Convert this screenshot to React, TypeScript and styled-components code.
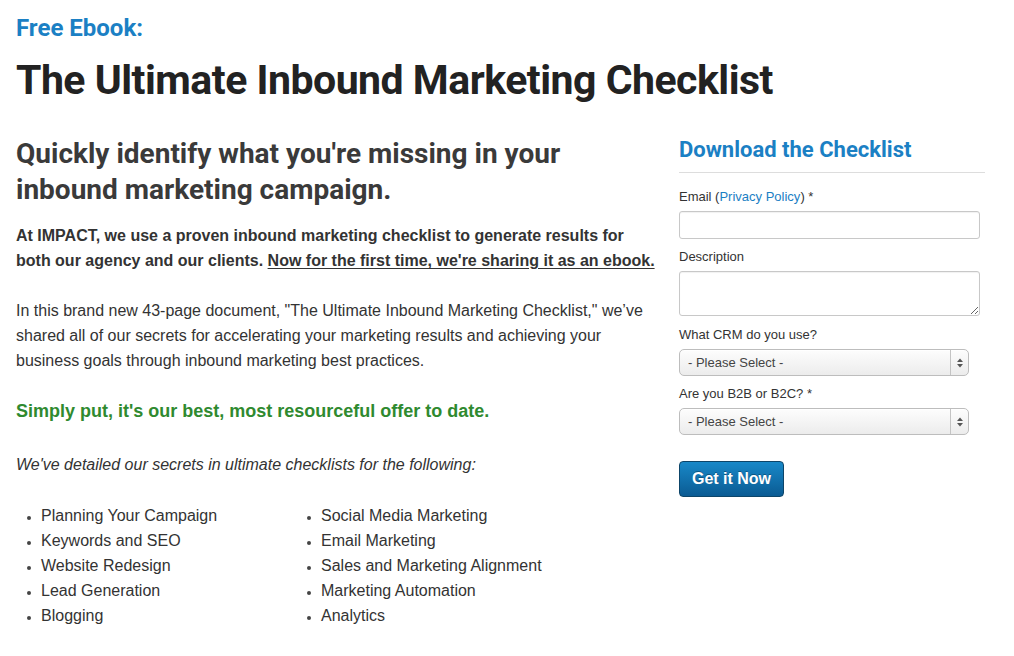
import styled, { createGlobalStyle } from 'styled-components';

const GlobalStyle = createGlobalStyle`
	html, body {
		margin: 0;
		padding: 0;
		background: #fff;
	}
	body {
		font-family: 'Liberation Sans', Arial, sans-serif;
		color: #333;
	}
`;

const leftItems = [
	'Planning Your Campaign',
	'Keywords and SEO',
	'Website Redesign',
	'Lead Generation',
	'Blogging',
];

const rightItems = [
	'Social Media Marketing',
	'Email Marketing',
	'Sales and Marketing Alignment',
	'Marketing Automation',
	'Analytics',
];

function SelectArrows() {
	return (
		<svg width='8' height='12' viewBox='0 0 8 12'>
			<path d='M4 1.5 L7 5 L1 5 Z' fill='#555' />
			<path d='M4 10.5 L7 7 L1 7 Z' fill='#555' />
		</svg>
	);
}

function App() {
	return (
		<Page>
			<GlobalStyle />
			<Kicker>Free Ebook:</Kicker>
			<Title>The Ultimate Inbound Marketing Checklist</Title>
			<Columns>
				<Main>
					<Lead>
						Quickly identify what you're missing in your
						<br />
						inbound marketing campaign.
					</Lead>
					<Intro>
						At IMPACT, we use a proven inbound marketing checklist to generate results for both our
						agency and our clients. <u>Now for the first time, we're sharing it as an ebook.</u>
					</Intro>
					<Body>
						In this brand new 43-page document, "The Ultimate Inbound Marketing Checklist," we’ve
						shared all of our secrets for accelerating your marketing results and achieving your
						business goals through inbound marketing best practices.
					</Body>
					<Highlight>Simply put, it's our best, most resourceful offer to date.</Highlight>
					<Note>We've detailed our secrets in ultimate checklists for the following:</Note>
					<ListGrid>
						<BulletList>
							{leftItems.map((item) => (
								<li key={item}>{item}</li>
							))}
						</BulletList>
						<BulletList>
							{rightItems.map((item) => (
								<li key={item}>{item}</li>
							))}
						</BulletList>
					</ListGrid>
				</Main>
				<Sidebar>
					<FormTitle>Download the Checklist</FormTitle>
					<Form onSubmit={(e) => e.preventDefault()}>
						<Label>
							Email (<FormLink href='#'>Privacy Policy</FormLink>) *
						</Label>
						<TextInput type='text' />
						<Label>Description</Label>
						<TextArea />
						<Label>What CRM do you use?</Label>
						<FakeSelect>
							<span>- Please Select -</span>
							<ArrowBox>
								<SelectArrows />
							</ArrowBox>
						</FakeSelect>
						<Label>Are you B2B or B2C? *</Label>
						<FakeSelect>
							<span>- Please Select -</span>
							<ArrowBox>
								<SelectArrows />
							</ArrowBox>
						</FakeSelect>
						<SubmitButton type='submit'>Get it Now</SubmitButton>
					</Form>
				</Sidebar>
			</Columns>
		</Page>
	);
}

const Page = styled.div`
	width: 1014px;
	height: 656px;
	overflow: hidden;
	box-sizing: border-box;
	padding: 14px 0 0 16px;
`;

const Kicker = styled.div`
	font-family: Roboto, 'Liberation Sans', sans-serif;
	font-weight: 700;
	font-size: 24px;
	line-height: 28px;
	color: #1b80c4;
`;

const Title = styled.h1`
	margin: 15px 0 0;
	font-family: Roboto, 'Liberation Sans', sans-serif;
	font-weight: 700;
	font-size: 41px;
	line-height: 46px;
	color: #222;
	letter-spacing: -0.5px;
`;

const Columns = styled.div`
	display: grid;
	grid-template-columns: 663px 306px;
	margin-top: 33px;
`;

const Main = styled.div`
	display: flex;
	flex-direction: column;
`;

const Lead = styled.h2`
	margin: 0;
	font-family: Roboto, 'Liberation Sans', sans-serif;
	font-weight: 700;
	font-size: 28px;
	line-height: 36px;
	color: #3a3a3a;
`;

const Intro = styled.p`
	margin: 15px 0 0;
	font-weight: 700;
	font-size: 16px;
	line-height: 25px;
	color: #333;
	width: 645px;

	u {
		text-underline-offset: 2px;
	}
`;

const Body = styled.p`
	margin: 25px 0 0;
	font-size: 16px;
	line-height: 25px;
	color: #333;
	width: 645px;
`;

const Highlight = styled.p`
	margin: 26px 0 0;
	font-weight: 700;
	font-size: 18px;
	line-height: 25px;
	color: #2f8a2f;
`;

const Note = styled.p`
	margin: 28px 0 0;
	font-style: italic;
	font-size: 16px;
	line-height: 25px;
	color: #333;
`;

const ListGrid = styled.div`
	display: grid;
	grid-template-columns: 280px 300px;
	margin-top: 26px;
`;

const BulletList = styled.ul`
	margin: 0;
	padding: 0 0 0 25px;
	font-size: 16px;
	line-height: 25px;
	color: #333;

	li {
		list-style: disc;
	}

	li::marker {
		font-size: 12px;
		color: #444;
	}
`;

const Sidebar = styled.div`
	display: flex;
	flex-direction: column;
`;

const FormTitle = styled.h3`
	margin: 0;
	padding-bottom: 8px;
	border-bottom: 1px solid #ddd;
	font-family: Roboto, 'Liberation Sans', sans-serif;
	font-weight: 700;
	font-size: 22px;
	line-height: 28px;
	color: #1b80c4;
`;

const Form = styled.form`
	display: flex;
	flex-direction: column;
	align-items: flex-start;
	padding-top: 15px;
`;

const Label = styled.label`
	font-size: 13px;
	line-height: 17px;
	color: #333;
	margin-bottom: 6px;
`;

const FormLink = styled.a`
	color: #1b80c4;
	text-decoration: none;
`;

const TextInput = styled.input`
	box-sizing: border-box;
	width: 301px;
	height: 28px;
	margin: 0 0 9px;
	border: 1px solid #c8c8c8;
	border-radius: 3px;
	box-shadow: inset 0 1px 1px rgba(0, 0, 0, 0.06);
	outline: none;
`;

const TextArea = styled.textarea`
	box-sizing: border-box;
	width: 301px;
	height: 45px;
	margin: 0 0 10px;
	border: 1px solid #c8c8c8;
	border-radius: 3px;
	resize: vertical;
	box-shadow: inset 0 1px 1px rgba(0, 0, 0, 0.06);
	outline: none;
`;

const FakeSelect = styled.div`
	box-sizing: border-box;
	width: 290px;
	height: 27px;
	margin-bottom: 9px;
	display: flex;
	align-items: stretch;
	border: 1px solid #bdbdbd;
	border-radius: 5px;
	background: linear-gradient(#fdfdfd, #ececec);
	box-shadow: inset 0 1px 0 #fff;
	font-size: 13px;
	color: #444;

	span {
		flex: 1;
		display: flex;
		align-items: center;
		padding-left: 8px;
	}
`;

const ArrowBox = styled.div`
	width: 17px;
	display: flex;
	align-items: center;
	justify-content: center;
	border-left: 1px solid #c4c4c4;
`;

const SubmitButton = styled.button`
	margin-top: 17px;
	box-sizing: border-box;
	width: 105px;
	height: 36px;
	border: 1px solid #0d4569;
	border-radius: 4px;
	background: linear-gradient(#1888c8, #0b5b93);
	color: #fff;
	font-family: 'Liberation Sans', Arial, sans-serif;
	font-weight: 700;
	font-size: 16px;
	text-shadow: 0 -1px 0 rgba(0, 0, 0, 0.3);
	cursor: pointer;
`;

export default App;
